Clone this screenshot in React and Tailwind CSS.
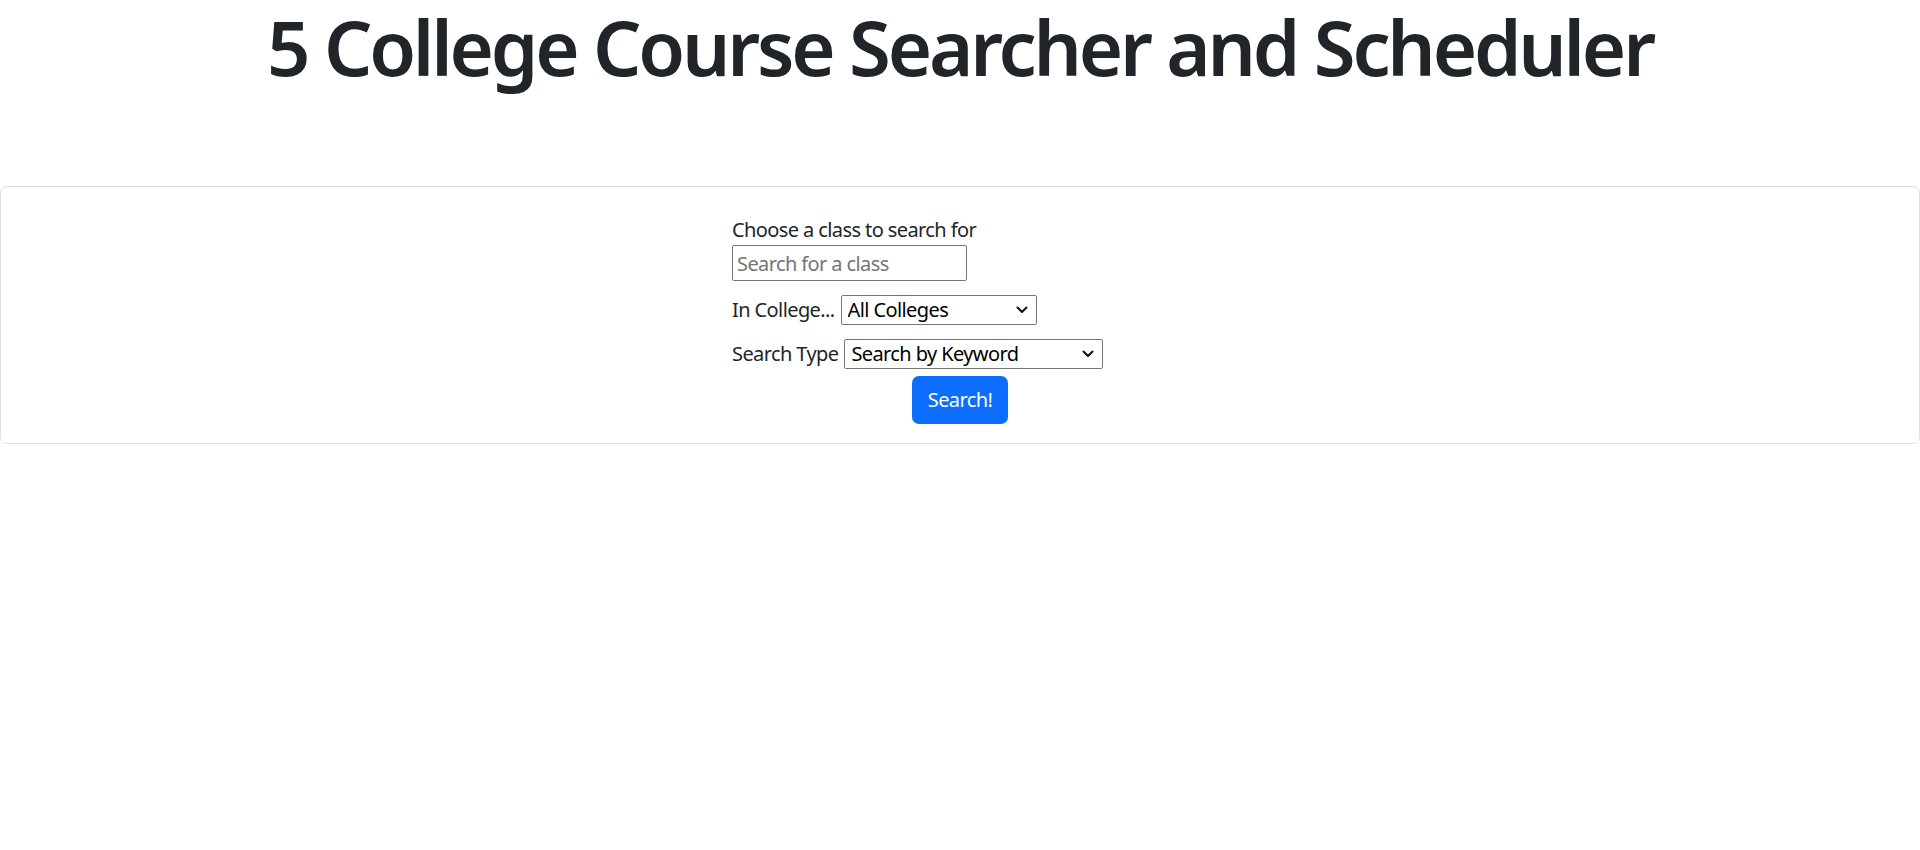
import React from 'react';

const Chevron = () => (
  <svg
    className="pointer-events-none absolute right-[9px] top-1/2 -translate-y-1/2"
    width="12"
    height="8"
    viewBox="0 0 12 8"
    fill="none"
  >
    <path d="M1.5 1.5 L6 6 L10.5 1.5" stroke="#111" strokeWidth="2" strokeLinecap="round" strokeLinejoin="round" />
  </svg>
);

const Select = ({ width, options }) => (
  <div className={`relative ml-[6px] ${width}`}>
    <select className="appearance-none w-full h-[30px] pl-[6px] pr-[26px] border border-[#767676] rounded-[2px] text-[20px] leading-[1.2] tracking-[-0.6px] bg-white text-black outline-none">
      {options.map((o) => (
        <option key={o}>{o}</option>
      ))}
    </select>
    <Chevron />
  </div>
);

const App = () => {
  return (
    <div className="min-h-[850px] bg-white text-[#212529] text-[20px] leading-[1.5] tracking-[-0.6px] font-['Segoe_UI','Noto_Sans',sans-serif]">
      {/* Title */}
      <h1 className="text-center text-[76px] font-semibold leading-[94px] tracking-[-3.2px]">
        5 College Course Searcher and Scheduler
      </h1>

      {/* Search card */}
      <div className="mt-[92px] border border-[#dfdfdf] rounded-[7px] pt-[28px] pb-[19px]">
        <form className="w-[456px] mx-auto" onSubmit={(e) => e.preventDefault()}>
          <label className="block">Choose a class to search for</label>
          <input
            type="text"
            placeholder="Search for a class"
            className="block w-[235px] h-[36px] px-[4px] border border-[#767676] rounded-[2px] text-[20px] placeholder:text-[#757575] outline-none"
          />

          <div className="flex items-center mt-[14px]">
            <span>In College...</span>
            <Select width="w-[196px]" options={['All Colleges', 'Amherst', 'Hampshire', 'Mount Holyoke', 'Smith', 'UMass']} />
          </div>

          <div className="flex items-center mt-[14px]">
            <span>Search Type</span>
            <Select width="w-[259px]" options={['Search by Keyword', 'Search by Course Number', 'Search by Instructor']} />
          </div>

          <div className="flex justify-center mt-[7px]">
            <button
              type="submit"
              className="h-[48px] w-[96px] bg-[#0d6efd] text-white rounded-[7px] text-[20px]"
            >
              Search!
            </button>
          </div>
        </form>
      </div>
    </div>
  );
};

export default App;
